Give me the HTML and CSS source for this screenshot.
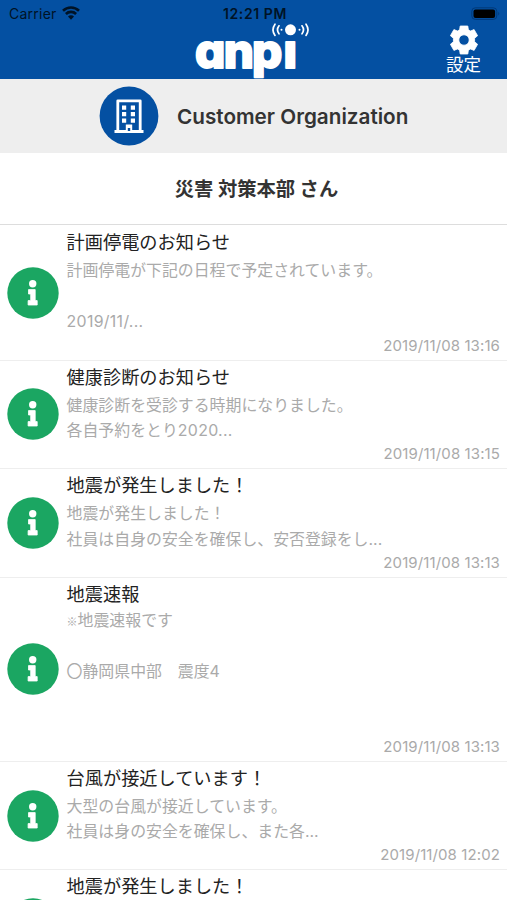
FILE: index.html
```html
<!DOCTYPE html>
<html lang="ja">
<head>
  <meta charset="utf-8">
  <title>anpi</title>
  <link rel="stylesheet" href="styles.css">
</head>
<body>
  <svg class="symbols" width="0" height="0">
    <symbol id="info" viewBox="0 0 52 52">
      <circle cx="26" cy="26" r="25.7" fill="#1ba662"/>
      <circle cx="25.700" cy="16.700" r="3.700" fill="#fff"/>
      <path d="M21.500 22.600h6.700v11h2v4.400h-9.100v-4.400h2.600v-6.600h-2.200z" fill="#fff" stroke="#fff" stroke-width=".8" stroke-linejoin="round"/>
    </symbol>
  </svg>

  <header class="header">
    <div class="status-bar">
      <div class="carrier">
        <span>Carrier</span>
        <svg class="wifi" width="18" height="14" viewBox="0 0 18 14">
          <path d="M1 4.700a11.500 11.500 0 0 1 16 0M3.900 8a7.300 7.300 0 0 1 10.200 0" fill="none" stroke="#001326" stroke-width="2.600"/>
          <path d="M9 13.800l-3-3.200a4.200 4.200 0 0 1 6 0z" fill="#001326"/>
        </svg>
      </div>
      <div class="clock">12:21 PM</div>
      <svg class="battery" width="30" height="14" viewBox="0 0 30 14">
        <rect x=".8" y=".8" width="25" height="11.600" rx="3.500" fill="none" stroke="#00397a"/>
        <rect x="2.500" y="2.500" width="21.600" height="8.500" rx="2" fill="#000"/>
        <path d="M27.300 4.800q2 1.800 0 3.600z" fill="#00397a"/>
      </svg>
    </div>
    <div class="nav">
      <svg class="logo" width="116" height="57" viewBox="0 0 116 57">
        <text class="logo-text" y="45.500">
          <tspan x="0">a</tspan><tspan x="28.800">n</tspan><tspan x="57">p</tspan><tspan x="88.500">ı</tspan>
        </text>
        <circle cx="95.500" cy="7.800" r="5.500" fill="#fff"/>
        <g fill="none" stroke="#fff" stroke-width="1.700" stroke-linecap="round">
          <path d="M84 3.800q-3 4 0 8M80 2.200q-4 5.600 0 11.200M107 3.800q3 4 0 8M111 2.200q4 5.600 0 11.200"/>
        </g>
        <circle cx="86.500" cy="7.800" r="1" fill="#fff"/>
        <circle cx="104.500" cy="7.800" r="1" fill="#fff"/>
      </svg>
      <div class="settings">
        <svg width="28" height="30" viewBox="0 0 28 30">
          <path fill="#fff" stroke="#fff" stroke-width=".8" stroke-linejoin="round" fill-rule="evenodd" d="M10.200 1h7.600l.6 3.800 2.100 1.200 3.600-1.400 3.500 6.100-3 2.500v3.600l3 2.500-3.500 6.100-3.600-1.400-2.100 1.200-.6 3.800h-7.600l-.6-3.800-2.100-1.200-3.600 1.400L.4 19.300l3-2.500v-3.600l-3-2.500 3.500-6.100L7.500 6l2.100-1.200zM14 9.800a5.200 5.200 0 1 0 0 10.400 5.200 5.200 0 1 0 0-10.400z"/>
        </svg>
        <span>設定</span>
      </div>
    </div>
  </header>

  <div class="organization">
    <svg width="60" height="60" viewBox="0 0 60 60">
      <circle cx="30" cy="30" r="29.400" fill="#0450a2"/>
      <path d="M18.800 45V14.800h22.400V45" fill="none" stroke="#fff" stroke-width="2.800" stroke-linejoin="round"/>
      <path d="M15.500 44h11.300v-5.500h6.400V44h11.300v3H15.500z" fill="#fff"/>
      <path d="M28.800 42h2.400v3h-2.400z" fill="#0450a2"/>
      <path d="M23 19.500h4.200v4.200H23zM31.800 19.500H36v4.200h-4.200zM23 26h4.200v4.200H23zM31.800 26H36v4.200h-4.200zM23 32.500h4.200v4.200H23zM31.800 32.500H36v4.200h-4.200z" fill="#fff"/>
    </svg>
    <span>Customer Organization</span>
  </div>

  <div class="user">災害 対策本部 さん</div>

  <div class="list">
    <div class="item long">
      <svg class="icon"><use href="#info"/></svg>
      <div class="content">
        <div class="title">計画停電のお知らせ</div>
        <div class="body">計画停電が下記の日程で予定されています。<br><br><span class="number">2019/11/...</span></div>
        <div class="date">2019/11/08 13:16</div>
      </div>
    </div>
    <div class="item">
      <svg class="icon"><use href="#info"/></svg>
      <div class="content">
        <div class="title">健康診断のお知らせ</div>
        <div class="body">健康診断を受診する時期になりました。<br>各自予約をとり<span class="number">2020...</span></div>
        <div class="date">2019/11/08 13:15</div>
      </div>
    </div>
    <div class="item">
      <svg class="icon"><use href="#info"/></svg>
      <div class="content">
        <div class="title">地震が発生しました！</div>
        <div class="body">地震が発生しました！<br>社員は自身の安全を確保し、安否登録をし...</div>
        <div class="date">2019/11/08 13:13</div>
      </div>
    </div>
    <div class="item quake">
      <svg class="icon"><use href="#info"/></svg>
      <div class="content">
        <div class="title">地震速報</div>
        <div class="body"><span class="mark">※</span>地震速報です<br><br>〇静岡県中部　震度4</div>
        <div class="date">2019/11/08 13:13</div>
      </div>
    </div>
    <div class="item">
      <svg class="icon"><use href="#info"/></svg>
      <div class="content">
        <div class="title">台風が接近しています！</div>
        <div class="body">大型の台風が接近しています。<br>社員は身の安全を確保し、また各...</div>
        <div class="date">2019/11/08 12:02</div>
      </div>
    </div>
    <div class="item">
      <svg class="icon"><use href="#info"/></svg>
      <div class="content">
        <div class="title">地震が発生しました！</div>
      </div>
    </div>
  </div>
</body>
</html>
```
FILE: styles.css
```css
* {
  box-sizing: border-box;
}

body {
  display: flex;
  flex-direction: column;
  margin: 0;
  height: 900px;
  background: #fff;
  font-family: Inter, "Noto Sans CJK JP", sans-serif;
}

svg {
  display: block;
}

.symbols {
  position: absolute;
}

.header {
  flex: none;
  height: 79px;
  background: #0450a2;
}

.status-bar {
  display: grid;
  grid-template-columns: 1fr auto 1fr;
  align-items: center;
  height: 22px;
  padding: 5px 6px 0 9px;
  color: #001326;
  font-size: 14px;
}

.carrier {
  display: flex;
  align-items: center;
  gap: 5px;
  letter-spacing: 0.25px;
}

.wifi {
  margin-top: -2px;
}

.clock {
  font-weight: 600;
  letter-spacing: 0.6px;
}

.battery {
  justify-self: end;
}

.nav {
  display: grid;
  grid-template-columns: 195px 1fr auto;
  padding-right: 26px;
}

.logo {
  grid-column: 2;
  overflow: visible;
}

.logo-text {
  font-size: 47.5px;
  font-weight: 800;
  font-feature-settings: "cv11";
  fill: #fff;
  stroke: #fff;
  stroke-width: 2px;
  stroke-linejoin: round;
}

.settings {
  display: flex;
  flex-direction: column;
  align-items: center;
  padding-top: 3px;
  color: #fff;
  font-size: 17.5px;
  line-height: 20px;
}

.organization {
  flex: none;
  display: flex;
  align-items: center;
  gap: 18px;
  height: 74px;
  padding-left: 99px;
  background: #eee;
  color: #333;
  font-size: 20.7px;
  font-weight: 600;
}

.user {
  flex: none;
  height: 72px;
  padding-left: 6px;
  border-bottom: 1px solid #ddd;
  color: #333;
  font-size: 19.3px;
  font-weight: 700;
  line-height: 72px;
  text-align: center;
}

.list {
  flex: 1;
  min-height: 0;
  padding-top: 0.6px;
  overflow: hidden;
}

.item {
  display: flex;
  align-items: center;
  gap: 7.6px;
  height: 108.6px;
  padding: 0 7px;
  border-bottom: 1px solid #eee;
}

.item.long {
  height: 135px;
}

.item.quake {
  height: 184px;
}

.icon {
  flex: none;
  width: 52px;
  height: 52px;
}

.content {
  flex: 1;
  display: flex;
  flex-direction: column;
  height: 100%;
}

.title {
  color: #222;
  font-size: 18.2px;
  line-height: 32px;
}

.body {
  color: #aaa;
  font-size: 15.9px;
  line-height: 25.5px;
}

.number {
  letter-spacing: 0.3px;
}

.date {
  margin-top: auto;
  padding-bottom: 5px;
  color: #aaa;
  font-size: 15px;
  letter-spacing: 0.1px;
  line-height: 18px;
  text-align: right;
}

.quake .body {
  margin-top: -1.5px;
}

.mark {
  font-family: "Noto Sans CJK JP", sans-serif;
  font-size: 11px;
  line-height: 1;
}
```
